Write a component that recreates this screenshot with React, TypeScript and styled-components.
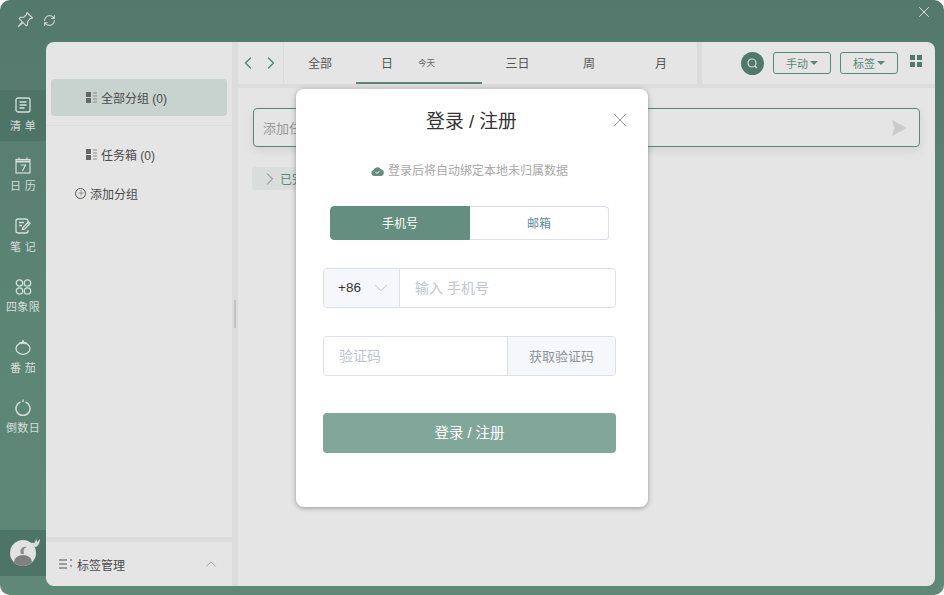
import styled, { createGlobalStyle } from 'styled-components';
import { ChevronDown, ChevronLeft, ChevronRight, ChevronUp, Plus, RefreshCw, X } from 'lucide-react';

const GlobalStyle = createGlobalStyle`
    html, body {
        margin: 0;
        padding: 0;
        background: #fff;
    }
    * {
        box-sizing: border-box;
    }
    body {
        font-family: "Liberation Sans", "Noto Sans CJK SC", sans-serif;
    }
`;

const StyledWindow = styled.div`
    position: relative;
    width: 944px;
    height: 595px;
    display: flex;
    flex-direction: column;
    overflow: hidden;
    border-radius: 10px;
    background: linear-gradient(180deg, #53796c 0%, #5d8576 55%, #5f8879 100%);
`;

const StyledTitleBar = styled.div`
    height: 42px;
    flex: none;
    display: flex;
    align-items: center;
    justify-content: space-between;
    padding: 0 11px 2px 16px;
    color: #c9d6d1;
`;

const StyledTitleTools = styled.div`
    display: flex;
    align-items: center;
    gap: 9px;
`;

const StyledWindowClose = styled.div`
    align-self: flex-start;
    margin-top: 3px;
    display: flex;
    color: #e4ebe8;
`;

const StyledBody = styled.div`
    flex: 1;
    min-height: 0;
    display: flex;
    padding: 0 9px 9px 0;
`;

const StyledRail = styled.nav`
    width: 46px;
    flex: none;
    display: flex;
    flex-direction: column;
    padding-top: 48px;
    gap: 9.5px;
`;

const StyledRailItem = styled.div<{ $active?: boolean }>`
    height: 51px;
    padding-top: 7px;
    display: flex;
    flex-direction: column;
    align-items: center;
    gap: 5.5px;
    color: #d3dfda;
    font-size: 11px;
    letter-spacing: 0.3px;
    line-height: 14px;
    white-space: nowrap;
    background: ${(p) => (p.$active ? '#4e7467' : 'transparent')};
`;

const StyledRailIcon = styled.span`
    height: 16px;
    display: flex;
    align-items: center;
    justify-content: center;
`;

const StyledAvatarCell = styled.div`
    height: 46px;
    margin-top: auto;
    margin-bottom: 10px;
    padding-left: 10px;
    background: #4e7467;
    display: flex;
    align-items: center;
`;

const StyledPanel = styled.div`
    flex: 1;
    min-width: 0;
    display: flex;
    border-radius: 8px;
    overflow: hidden;
    background: #e5e5e5;
`;

const StyledSidebar = styled.aside`
    width: 186px;
    flex: none;
    display: flex;
    flex-direction: column;
`;

const StyledGroupTop = styled.div`
    height: 84px;
    padding: 37px 5px 0;
    border-bottom: 1px solid #dcdcdc;
`;

const StyledGroupRow = styled.div<{ $active?: boolean }>`
    height: 37px;
    padding: 0 0 1px 35px;
    display: flex;
    align-items: center;
    gap: 4px;
    border-radius: 4px;
    font-size: 12px;
    color: #4b4b4b;
    background: ${(p) => (p.$active ? '#c8d2cf' : 'transparent')};
`;

const StyledInbox = styled(StyledGroupRow)`
    margin: 10px 5px 0;
`;

const StyledAddGroup = styled.div`
    margin: 2px 0 0 29px;
    height: 37px;
    padding-bottom: 1px;
    display: flex;
    align-items: center;
    gap: 4px;
    font-size: 12px;
    color: #4b4b4b;
`;

const StyledAddIcon = styled.span`
    width: 11px;
    height: 11px;
    border: 1px solid #555;
    border-radius: 50%;
    display: flex;
    align-items: center;
    justify-content: center;
`;

const StyledTagFooter = styled.div`
    margin-top: auto;
    height: 49px;
    border-top: 5px solid #dcdcdc;
    padding: 0 12px 0 13px;
    display: flex;
    align-items: center;
    gap: 5px;
    font-size: 12px;
    color: #4b4b4b;
`;

const StyledTagLabel = styled.span`
    flex: 1;
`;

const StyledVSplit = styled.div`
    width: 6px;
    flex: none;
    background: #dcdcdc;
    display: flex;
    align-items: center;
    justify-content: center;
`;

const StyledGrip = styled.div`
    width: 2px;
    height: 28px;
    margin-left: -1px;
    background: #c2c2c2;
`;

const StyledMain = styled.main`
    flex: 1;
    min-width: 0;
    display: flex;
    flex-direction: column;
`;

const StyledHeader = styled.header`
    height: 46px;
    flex: none;
    display: flex;
    border-bottom: 4px solid #dcdcdc;
`;

const StyledArrows = styled.div`
    width: 46px;
    flex: none;
    display: flex;
    align-items: center;
    justify-content: space-between;
    padding: 0 2px 0 0;
    color: #5b8273;
    border-right: 1px solid #dcdcdc;
`;

const StyledTabs = styled.div`
    display: flex;
    width: 413px;
    flex: none;
`;

const StyledTab = styled.div<{ $width: number; $active?: boolean; $offset?: number }>`
    width: ${(p) => p.$width}px;
    padding-left: ${(p) => p.$offset ?? 0}px;
    display: flex;
    align-items: center;
    justify-content: ${(p) => (p.$offset ? 'flex-start' : 'center')};
    font-size: 12px;
    color: #555;
    border-bottom: 2px solid ${(p) => (p.$active ? '#5d8576' : 'transparent')};
`;

const StyledTodayTag = styled.span`
    margin: 2px 0 0 25px;
    font-size: 8.5px;
    line-height: 10px;
    color: #666;
`;

const StyledTools = styled.div`
    flex: 1;
    display: flex;
    align-items: center;
    gap: 9px;
    padding: 0 12px 0 39px;
    border-left: 5px solid #dcdcdc;
`;

const StyledSearch = styled.div`
    width: 23px;
    height: 23px;
    flex: none;
    border-radius: 50%;
    background: #4f7a6b;
    display: flex;
    align-items: center;
    justify-content: center;
`;

const StyledToolButton = styled.div`
    width: 58px;
    height: 22px;
    flex: none;
    border: 1px solid #5d8576;
    border-radius: 3px;
    display: flex;
    align-items: center;
    justify-content: center;
    gap: 2px;
    font-size: 11px;
    color: #5d8576;
`;

const StyledCaret = styled.span`
    width: 0;
    height: 0;
    border-left: 4px solid transparent;
    border-right: 4px solid transparent;
    border-top: 4px solid #5d8576;
`;

const StyledGridIcon = styled.div`
    display: grid;
    grid-template-columns: 5px 5px;
    grid-auto-rows: 5px;
    gap: 2px;
    margin: 0 0 4px 3px;
    & > span {
        background: #4f7a6b;
    }
`;

const StyledContent = styled.div`
    flex: 1;
    padding: 20px 15px 0 15px;
`;

const StyledTaskInput = styled.div`
    height: 39px;
    display: flex;
    align-items: center;
    justify-content: space-between;
    padding: 0 12px 0 9px;
    border: 1px solid #5d8576;
    border-radius: 4px;
    font-size: 13px;
    color: #999;
    box-shadow: 0 4px 10px rgba(0, 0, 0, 0.08);
`;

const StyledDoneRow = styled.div`
    width: 90px;
    height: 23px;
    margin: 20px 0 0 -1px;
    padding-left: 8px;
    display: flex;
    align-items: center;
    border-radius: 3px;
    font-size: 12px;
    color: #5d8576;
    background: #d9dedc;
`;

const StyledOverlay = styled.div`
    position: absolute;
    inset: 0;
    display: flex;
    align-items: center;
    justify-content: center;
`;

const StyledDialog = styled.div`
    position: relative;
    width: 352px;
    height: 418px;
    padding: 21px 32px 0 27px;
    display: flex;
    flex-direction: column;
    background: #fff;
    border-radius: 8px;
    box-shadow: 0 1px 5px rgba(0, 0, 0, 0.35);
`;

const StyledCloseButton = styled.div`
    position: absolute;
    top: 20px;
    right: 17px;
    color: #8c8c8c;
    display: flex;
`;

const StyledDialogTitle = styled.h2`
    margin: 0 0 0 4px;
    text-align: center;
    font-size: 18.8px;
    line-height: 24px;
    font-weight: 400;
    color: #333;
`;

const StyledHint = styled.div`
    margin-top: 29px;
    display: flex;
    align-items: center;
    justify-content: center;
    gap: 4px;
    font-size: 12px;
    line-height: 16px;
    color: #a8a8a8;
`;

const StyledSwitch = styled.div`
    display: flex;
    margin: 27px 7px 0;
    height: 34px;
    width: 279px;
`;

const StyledSwitchItem = styled.div<{ $active?: boolean }>`
    width: ${(p) => (p.$active ? '140px' : '139px')};
    flex: none;
    display: flex;
    align-items: center;
    justify-content: center;
    font-size: 12px;
    color: ${(p) => (p.$active ? '#fff' : '#5d8a9b')};
    background: ${(p) => (p.$active ? '#648f80' : '#fff')};
    border: 1px solid ${(p) => (p.$active ? '#648f80' : '#dcdfe6')};
    border-left-width: ${(p) => (p.$active ? '1px' : '0')};
    border-radius: ${(p) => (p.$active ? '4px 0 0 4px' : '0 4px 4px 0')};
`;

const StyledField = styled.div`
    margin-top: 28px;
    width: 293px;
    height: 40px;
    flex: none;
    display: flex;
    border: 1px solid #dcdfe6;
    border-radius: 4px;
    overflow: hidden;
    font-size: 14px;
`;

const StyledPrefix = styled.div`
    width: 76px;
    flex: none;
    display: flex;
    align-items: center;
    justify-content: space-between;
    padding: 0 7px 0 14px;
    font-size: 13.5px;
    color: #333;
    background: #f5f7fa;
    border-right: 1px solid #dcdfe6;
`;

const StyledInputText = styled.div`
    flex: 1;
    display: flex;
    align-items: center;
    padding: 0 0 2px 15px;
    color: #c0c4cc;
`;

const StyledSuffix = styled.div`
    width: 108px;
    flex: none;
    display: flex;
    align-items: center;
    justify-content: center;
    padding-bottom: 1px;
    font-size: 13px;
    color: #909399;
    background: #f5f7fa;
    border-left: 1px solid #dcdfe6;
`;

const StyledSubmit = styled.div`
    margin-top: 37px;
    width: 293px;
    height: 40px;
    flex: none;
    display: flex;
    align-items: center;
    justify-content: center;
    padding-bottom: 2px;
    border-radius: 4px;
    font-size: 14.5px;
    color: #fff;
    background: #80a79a;
`;

const PinIcon = () => (
    <svg width="18" height="18" viewBox="0 0 18 18" fill="none" stroke="currentColor" strokeWidth="1.2" strokeLinejoin="round">
        <path d="M11 1.5l5.5 5.5-2.2.6-2.6 2.7-.2 3.5-1.3 1-3-3.2-4.9 4 4-5L3.2 7.600l1.100-1.200 3.400-.2 2.700-2.600z" />
    </svg>
);

const GroupIcon = () => (
    <svg width="11" height="11" viewBox="0 0 11 11">
        <rect x="0" y="0" width="5" height="5" fill="#666" />
        <rect x="0" y="6" width="5" height="5" fill="#666" />
        <path d="M7 1h4M7 4h4M7 7h4M7 10h4" stroke="#8a8a8a" strokeWidth="1" />
    </svg>
);

const ListRailIcon = () => (
    <svg width="16" height="16" viewBox="0 0 16 16" fill="none" stroke="currentColor" strokeWidth="1.3">
        <rect x="1" y="1" width="14" height="14" rx="2" />
        <path d="M4.500 5h7M4.500 8h7M4.500 11h5" />
    </svg>
);

const CalendarRailIcon = () => (
    <svg width="16" height="17" viewBox="0 0 16 17" fill="none" stroke="currentColor" strokeWidth="1.2">
        <rect x="1" y="2.500" width="14" height="13.500" />
        <path d="M1 4.500h14" strokeWidth="2" />
        <path d="M4 .5v2M12 .5v2" />
        <path d="M5.500 8h5l-3 6" />
    </svg>
);

const NoteRailIcon = () => (
    <svg width="16" height="16" viewBox="0 0 16 16" fill="none" stroke="currentColor" strokeWidth="1.3">
        <path d="M13 6V3a2 2 0 0 0-2-2H3a2 2 0 0 0-2 2v10a2 2 0 0 0 2 2h8a2 2 0 0 0 2-2v-1" />
        <path d="M4 4.500h5M4 7.500h3M7.500 11.500l.4-2 5.600-5.500 1.500 1.500-5.500 5.600z" />
    </svg>
);

const QuadrantRailIcon = () => (
    <svg width="17" height="16" viewBox="0 0 17 16" fill="none" stroke="currentColor" strokeWidth="1.3">
        <circle cx="4.500" cy="4" r="3.200" />
        <circle cx="12.500" cy="4" r="3.200" />
        <circle cx="4.500" cy="12" r="3.200" />
        <circle cx="12.500" cy="12" r="3.200" />
    </svg>
);

const TomatoRailIcon = () => (
    <svg width="16" height="16" viewBox="0 0 16 16" fill="none" stroke="currentColor" strokeWidth="1.300">
        <ellipse cx="8" cy="9.500" rx="7" ry="5.800" />
        <path d="M8 .5l1.500 2.500 2.500.5-2 2-2-1-2 1-2-2 2.500-.5z" fill="currentColor" stroke="none" />
    </svg>
);

const CountdownRailIcon = () => (
    <svg width="16" height="17" viewBox="0 0 16 17" fill="none" stroke="currentColor" strokeWidth="1.500">
        <path d="M5.500 3a7 7 0 1 0 5 0" />
        <path d="M8 .5v2.500" />
    </svg>
);

const TaskSendIcon = () => (
    <svg width="15" height="16" viewBox="0 0 15 16">
        <path d="M0 0l15 8-15 8 2.500-8z" fill="#cbcbcb" />
    </svg>
);

const CloudIcon = () => (
    <svg width="13" height="10" viewBox="0 0 13 10">
        <path d="M3 10a3 3 0 0 1-.4-5.900A4 4 0 0 1 10 3.300 3.400 3.400 0 0 1 10 10z" fill="#648f80" />
        <path d="M4.500 6l1.500 1.500 2.500-2.500" stroke="#fff" strokeWidth="1" fill="none" />
    </svg>
);

const Avatar = () => (
    <svg width="32" height="30" viewBox="0 0 32 30">
        <defs>
            <clipPath id="avatar-clip">
                <circle cx="13" cy="15" r="13" />
            </clipPath>
        </defs>
        <circle cx="13" cy="15" r="13" fill="#e2e2e2" />
        <ellipse cx="13" cy="24" rx="9" ry="7" fill="#808080" clipPath="url(#avatar-clip)" />
        <path d="M11 16c-2-4 1-8 6-7-3 1-4 3-3 7z" fill="#8c8c8c" />
        <path d="M21 5c1 3 3 4 5 4 2-1 4-4 4-8-1 1-2 2-2.500 3.500C27 3 26.500 2 26 1c-.5 2-1 3-1.500 4-1-.5-2.500-.5-3.500 0z" fill="#d5e0dc" />
    </svg>
);

const railItems = [
    { label: '清 单', icon: <ListRailIcon />, active: true },
    { label: '日 历', icon: <CalendarRailIcon /> },
    { label: '笔 记', icon: <NoteRailIcon /> },
    { label: '四象限', icon: <QuadrantRailIcon /> },
    { label: '番 茄', icon: <TomatoRailIcon /> },
    { label: '倒数日', icon: <CountdownRailIcon /> },
];

const tabs = [
    { label: '全部', width: 72 },
    { label: '日', width: 126, active: true, today: true, offset: 25 },
    { label: '三日', width: 71 },
    { label: '周', width: 72 },
    { label: '月', width: 72 },
];

const App = () => {
    return (
        <StyledWindow>
            <GlobalStyle />
            <StyledTitleBar>
                <StyledTitleTools>
                    <PinIcon />
                    <RefreshCw size={13} strokeWidth={2} />
                </StyledTitleTools>
                <StyledWindowClose>
                    <X size={18} strokeWidth={1.2} />
                </StyledWindowClose>
            </StyledTitleBar>
            <StyledBody>
                <StyledRail>
                    {railItems.map((item) => (
                        <StyledRailItem key={item.label} $active={item.active}>
                            <StyledRailIcon>{item.icon}</StyledRailIcon>
                            {item.label}
                        </StyledRailItem>
                    ))}
                    <StyledAvatarCell>
                        <Avatar />
                    </StyledAvatarCell>
                </StyledRail>
                <StyledPanel>
                    <StyledSidebar>
                        <StyledGroupTop>
                            <StyledGroupRow $active>
                                <GroupIcon />
                                全部分组 (0)
                            </StyledGroupRow>
                        </StyledGroupTop>
                        <StyledInbox>
                            <GroupIcon />
                            任务箱 (0)
                        </StyledInbox>
                        <StyledAddGroup>
                            <StyledAddIcon>
                                <Plus size={8} strokeWidth={1.5} color="#555" />
                            </StyledAddIcon>
                            添加分组
                        </StyledAddGroup>
                        <StyledTagFooter>
                            <svg width="13" height="10" viewBox="0 0 13 10">
                                <path d="M0 1h8M0 5h8M0 9h8M11 1h2M11 7h2" stroke="#555" strokeWidth="1.200" />
                            </svg>
                            <StyledTagLabel>标签管理</StyledTagLabel>
                            <ChevronUp size={18} strokeWidth={1} color="#888" />
                        </StyledTagFooter>
                    </StyledSidebar>
                    <StyledVSplit>
                        <StyledGrip />
                    </StyledVSplit>
                    <StyledMain>
                        <StyledHeader>
                            <StyledArrows>
                                <ChevronLeft size={20} strokeWidth={1.6} />
                                <ChevronRight size={20} strokeWidth={1.6} />
                            </StyledArrows>
                            <StyledTabs>
                                {tabs.map((tab) => (
                                    <StyledTab key={tab.label} $width={tab.width} $active={tab.active} $offset={tab.offset}>
                                        {tab.label}
                                        {tab.today && <StyledTodayTag>今天</StyledTodayTag>}
                                    </StyledTab>
                                ))}
                            </StyledTabs>
                            <StyledTools>
                                <StyledSearch>
                                    <svg width="11" height="11" viewBox="0 0 11 11" fill="none" stroke="#cfe0e6" strokeWidth="1.200">
                                        <circle cx="5" cy="5" r="4" />
                                        <path d="M8 8l2 2" />
                                    </svg>
                                </StyledSearch>
                                <StyledToolButton>
                                    手动
                                    <StyledCaret />
                                </StyledToolButton>
                                <StyledToolButton>
                                    标签
                                    <StyledCaret />
                                </StyledToolButton>
                                <StyledGridIcon>
                                    <span />
                                    <span />
                                    <span />
                                    <span />
                                </StyledGridIcon>
                            </StyledTools>
                        </StyledHeader>
                        <StyledContent>
                            <StyledTaskInput>
                                添加任务
                                <TaskSendIcon />
                            </StyledTaskInput>
                            <StyledDoneRow>
                                <ChevronRight size={20} strokeWidth={1} color="#666" />
                                已完成
                            </StyledDoneRow>
                        </StyledContent>
                    </StyledMain>
                </StyledPanel>
            </StyledBody>
            <StyledOverlay>
                <StyledDialog>
                    <StyledCloseButton>
                        <X size={22} strokeWidth={1} />
                    </StyledCloseButton>
                    <StyledDialogTitle>登录 / 注册</StyledDialogTitle>
                    <StyledHint>
                        <CloudIcon />
                        登录后将自动绑定本地未归属数据
                    </StyledHint>
                    <StyledSwitch>
                        <StyledSwitchItem $active>手机号</StyledSwitchItem>
                        <StyledSwitchItem>邮箱</StyledSwitchItem>
                    </StyledSwitch>
                    <StyledField>
                        <StyledPrefix>
                            +86
                            <ChevronDown size={22} strokeWidth={0.9} color="#b5b8be" />
                        </StyledPrefix>
                        <StyledInputText>输入 手机号</StyledInputText>
                    </StyledField>
                    <StyledField>
                        <StyledInputText>验证码</StyledInputText>
                        <StyledSuffix>获取验证码</StyledSuffix>
                    </StyledField>
                    <StyledSubmit>登录 / 注册</StyledSubmit>
                </StyledDialog>
            </StyledOverlay>
        </StyledWindow>
    );
};

export default App;
